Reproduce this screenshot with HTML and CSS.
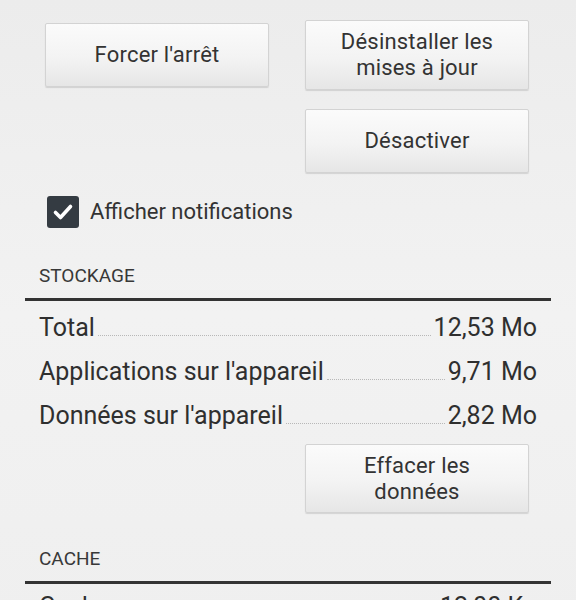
FILE: index.html
```html
<!DOCTYPE html>
<html lang="fr">
<head>
<meta charset="utf-8">
<title>Infos sur l'application</title>
<link rel="stylesheet" href="styles.css">
</head>
<body>
<div class="page">
  <div class="actions">
    <button class="btn btn-single">Forcer l'arrêt</button>
    <button class="btn">Désinstaller les<br>mises à jour</button>
    <button class="btn btn-single col2 gap-top">Désactiver</button>
  </div>

  <label class="check-row">
    <span class="checkbox">
      <svg viewBox="0 0 32 32" width="32" height="32"><path d="M8.5 16.5 L13.5 21.5 L23.5 10.5" fill="none" stroke="#fff" stroke-width="3.6" stroke-linecap="round" stroke-linejoin="round"/></svg>
    </span>
    <span class="check-label">Afficher notifications</span>
  </label>

  <div class="section-header">STOCKAGE</div>
  <div class="stat-list">
    <div class="stat"><span class="stat-label">Total</span><span class="leader"></span><span class="stat-value">12,53 Mo</span></div>
    <div class="stat"><span class="stat-label">Applications sur l'appareil</span><span class="leader"></span><span class="stat-value">9,71 Mo</span></div>
    <div class="stat"><span class="stat-label">Données sur l'appareil</span><span class="leader"></span><span class="stat-value">2,82 Mo</span></div>
  </div>
  <div class="actions actions-clear">
    <button class="btn col2">Effacer les<br>données</button>
  </div>

  <div class="section-header section-cache">CACHE</div>
  <div class="stat-list cache-list">
    <div class="stat"><span class="stat-label">Cache</span><span class="leader"></span><span class="stat-value">12,00 Ko</span></div>
  </div>
</div>
</body>
</html>
```

FILE: styles.css
```css
html, body {
  margin: 0;
  padding: 0;
}
body {
  background: linear-gradient(180deg, #ececec 0%, #f2f2f2 50%, #efefef 100%);
  font-family: Roboto, "Noto Sans", "Liberation Sans", sans-serif;
  color: #2f2f2f;
  overflow: hidden;
}
.page {
  width: 526px;
  margin-left: 25px;
  display: flex;
  flex-direction: column;
}
.actions {
  display: grid;
  grid-template-columns: 224px 224px;
  justify-content: space-between;
  align-items: center;
  padding: 0 22px 0 20px;
  margin-top: 20px;
}
.btn {
  font-family: inherit;
  font-size: 22px;
  line-height: 26px;
  letter-spacing: 0.2px;
  color: #333;
  background: linear-gradient(180deg, #fbfbfb 0%, #f3f3f3 55%, #e6e6e6 100%);
  border: 1px solid #d3d3d3;
  border-radius: 2px;
  box-shadow: 0 1px 1px rgba(0,0,0,0.12);
  height: 70px;
  padding: 0 8px;
  box-sizing: border-box;
}
.btn-single {
  height: 64px;
}
.col2 {
  grid-column: 2;
}
.gap-top {
  margin-top: 19px;
}
.actions-clear {
  margin-top: 6px;
}
.actions-clear .btn {
  height: 69px;
}
.check-row {
  display: flex;
  align-items: center;
  margin-top: 23px;
  padding-left: 22px;
  gap: 11px;
}
.checkbox {
  width: 32px;
  height: 32px;
  background: #343b42;
  border-radius: 3px;
  display: flex;
}
.check-label {
  font-size: 22px;
  line-height: 32px;
  color: #333;
}
.section-header {
  font-size: 19px;
  line-height: 24px;
  color: #383838;
  padding: 36px 14px 10px;
  border-bottom: 3px solid #333;
}
.section-cache {
  padding-top: 34px;
}
.stat-list {
  display: flex;
  flex-direction: column;
  padding: 5px 14px 0;
}
.cache-list {
  padding-top: 1px;
}
.stat {
  display: flex;
  align-items: baseline;
  font-size: 25px;
  line-height: 44px;
  color: #2f2f2f;
}
.leader {
  flex: 1;
  height: 0;
  margin: 0 3px;
  border-bottom: 1px dotted #b8b8b8;
}
```
